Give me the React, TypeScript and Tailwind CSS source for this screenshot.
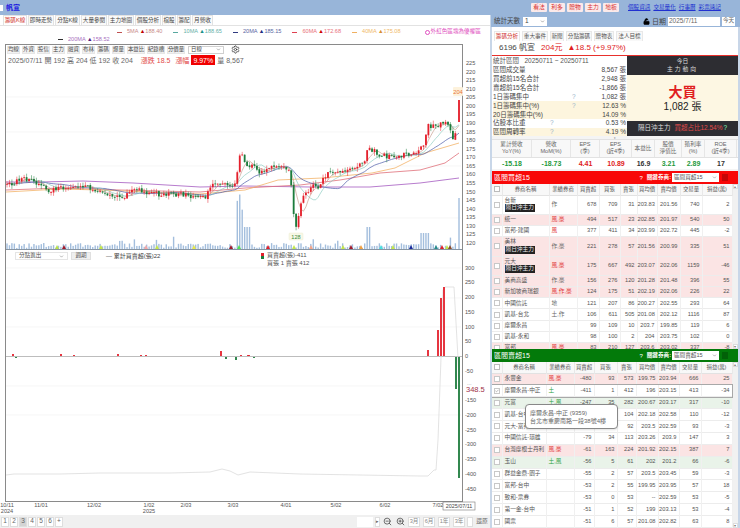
import { Lock, LockOpen, Settings, ZoomIn, ZoomOut, ChevronDown, Check } from "lucide-react";

// price anchors in screen coordinates [x, y of close]
const anchors: [number, number][] = [
  [7, 186], [15, 183], [22, 178], [30, 180], [35, 183], [42, 187], [50, 192], [55, 189], [62, 187], [70, 186],
  [85, 187], [100, 191], [115, 196], [125, 197], [135, 190], [150, 193], [165, 195], [180, 194], [190, 197],
  [205, 198], [208, 192], [212, 183], [225, 183], [236, 185], [238, 165], [240, 153], [244, 158], [247, 165],
  [254, 167], [260, 172], [270, 166], [280, 167], [285, 170], [288, 168], [291, 180], [293, 212], [296, 228],
  [299, 216], [301, 202], [305, 193], [312, 186], [318, 189], [322, 179], [330, 172], [345, 173], [355, 166],
  [365, 160], [368, 149], [375, 151], [380, 155], [392, 157], [400, 155], [410, 154], [420, 149], [424, 143],
  [428, 126], [436, 125], [442, 124], [448, 124], [451, 132], [453, 141], [456, 130], [457, 122], [459, 100],
];

function rng(seed: number) {
  let s = seed;
  return () => {
    s = (s * 16807) % 2147483647;
    return (s - 1) / 2147483646;
  };
}

function closeAt(x: number) {
  for (let i = 1; i < anchors.length; i++) {
    if (x <= anchors[i][0]) {
      const [x0, y0] = anchors[i - 1];
      const [x1, y1] = anchors[i];
      return y0 + ((y1 - y0) * (x - x0)) / (x1 - x0);
    }
  }
  return 100;
}

const r = rng(6196);
const xs: number[] = [];
for (let x = 7; x <= 459; x += 2.45) xs.push(x);
xs[xs.length - 1] = 459;
const closes = xs.map((x, i) => closeAt(x) + (i === xs.length - 1 ? 0 : (r() - 0.5) * 5));
closes[closes.length - 1] = 100;

const candles = closes.map((c, i) => {
  const o = i === 0 ? c + 1 : i === closes.length - 1 ? 122 : closes[i - 1] + (r() - 0.5) * 1.5;
  const top = Math.min(o, c) - (i === closes.length - 1 ? 0 : r() * 4);
  const bottom = Math.max(o, c) + (i === closes.length - 1 ? 0 : r() * 4);
  return { x: xs[i], o, c, top, bottom };
});

function sma(n: number) {
  return closes
    .map((_, i) => {
      let sum = 0;
      for (let k = 0; k < n; k++) sum += closes[Math.max(0, i - k)];
      return `${xs[i].toFixed(1)},${(sum / n).toFixed(1)}`;
    })
    .join(" ");
}

const line200 = "6,182 40,182 83,181 133,183 200,187 245,186 310,187 370,187 420,183 459,178";
const line60 = "6,190 60,188 120,190 200,192 245,188 300,185 340,180 380,173 420,170 445,163 459,153";
const line40 = "6,192 60,189 100,190 200,194 245,190 278,180 322,178 372,173 395,168 425,153 459,143";

const volumes = xs.map((x) => {
  let h = 1 + r() * 5;
  if (r() > 0.88) h += r() * 8;
  if (x > 236 && x < 244) h = 38 + r() * 20;
  if (x >= 244 && x < 250) h = 22;
  if (x > 365 && x < 370) h = 22;
  if (x > 420 && x < 430) h = 16;
  if (x === 459) h = 51;
  return h;
});

const markers: [number, string][] = [
  [57, "#b8e04a"], [64, "#a11a2a"], [101, "#c4e64a"], [146, "#f4a7a7"], [157, "#c4e64a"], [194, "#e8e84a"],
  [231, "#a11a2a"], [239, "#55e055"], [268, "#e0202a"], [294, "#c4e64a"], [311, "#f4a58a"], [343, "#c4e64a"],
  [351, "#a11a2a"], [361, "#f0a040"], [381, "#4ae0e0"], [393, "#c4e64a"], [411, "#1a2a9a"], [436, "#2a8a8a"],
  [442, "#e0202a"], [447, "#c4e64a"], [450, "#8a4a2a"],
];

const priceLabels = [225, 220, 215, 210, 205, 200, 195, 190, 185, 180, 175, 170, 165, 160, 155, 150, 145, 140, 135, 130, 125, 120];
const flowLabels = [300, 250, 200, 150, 100, 50, 0, -50, -150, -200, -250, -300, -350, -400, -450];
const dates: [number, string, string?][] = [
  [7, "10/11", "2024"], [41, "11/01"], [94, "12/02"], [149, "1/02", "2025"], [186, "2/03"], [233, "3/03"],
  [286, "4/01"], [336, "5/02"], [385, "6/02"], [438, "7/02"],
];
const flowBars: [number, number][] = [
  [13, 2], [16, -1], [61, 2], [74, 1], [118, 2], [141, 1], [146, 1], [221, 5], [226, -2], [236, -3], [241, 1],
  [248, 1], [249, 1], [254, -1], [428, 6], [438, 26], [441, 58], [444, 69], [456, -32], [459, -121],
];

function Chart() {
  return (
    <svg viewBox="0 44 490 471" className="block w-[490px] h-[471px]">
      <rect x="5.5" y="44.5" width="457" height="457" fill="#fff" stroke="#8a8a8a" strokeWidth="1" />
      {[97, 132, 166, 218].map((y) => (
        <line key={y} x1="6" x2="461" y1={y} y2={y} stroke="#f2f2f2" strokeWidth="0.7" />
      ))}
      {[268, 298, 327, 386, 415].map((y) => (
        <line key={y} x1="6" x2="461" y1={y} y2={y} stroke="#f2f2f2" strokeWidth="0.7" />
      ))}
      {volumes.map((h, i) => (
        <rect key={i} x={xs[i] - 0.7} y={249 - h} width="1.4" height={h} fill="#a3bedd" />
      ))}
      <polyline points={line200} fill="none" stroke="#a55ac0" strokeWidth="0.8" />
      <polyline points={line60} fill="none" stroke="#e0707a" strokeWidth="0.8" />
      <polyline points={line40} fill="none" stroke="#f2b46a" strokeWidth="0.8" />
      <polyline points={sma(20)} fill="none" stroke="#4a5aa8" strokeWidth="0.7" />
      <polyline points={sma(10)} fill="none" stroke="#7cc4b8" strokeWidth="0.6" />
      <polyline points={sma(5)} fill="none" stroke="#c09080" strokeWidth="0.6" />
      {candles.map((k, i) => {
        const up = k.c <= k.o;
        const color = up ? "#e4202c" : "#1c7c3c";
        return (
          <g key={i}>
            <line x1={k.x} x2={k.x} y1={k.top} y2={k.bottom} stroke={color} strokeWidth="0.5" />
            <rect x={k.x - 0.9} y={Math.min(k.o, k.c)} width="1.8" height={Math.max(0.8, Math.abs(k.o - k.c))} fill={color} />
          </g>
        );
      })}
      <line x1="6" x2="462" y1="249.5" y2="249.5" stroke="#6a7a8a" strokeWidth="0.8" />
      {markers.map(([x, c]) => (
        <polygon key={x} points={`${x - 2},249 ${x + 2},249 ${x},245`} fill={c} />
      ))}
      <rect x="289" y="233" width="14" height="7" rx="1" fill="#f8f8e8" stroke="#e8e8c8" strokeWidth="0.4" />
      <text x="296" y="238.8" fontSize="5.6" textAnchor="middle" fill="#3a8a3a">128</text>
      <rect x="453" y="87" width="10" height="9" rx="1" fill="#fdf2dc" />
      <text x="458" y="94" fontSize="5.8" textAnchor="middle" fill="#e8763a">204</text>
      {priceLabels.map((p) => (
        <text key={p} x="466" y={65 + (225 - p) * 1.714} fontSize="5.6" fill="#555">{p}</text>
      ))}

      <line x1="6" x2="462" y1="356.5" y2="356.5" stroke="#b5b5b5" strokeWidth="0.9" />
      <polyline
        points="6,475 14,474 60,474 100,473 170,473 210,472 222,469 230,471 238,475 250,472 300,474 420,476 428,476 434,470 436,470 438,440 441,358 443,290 445,287 454,287 458,358 459,380"
        fill="none"
        stroke="#dcdcdc"
        strokeWidth="0.8"
      />
      {flowBars.map(([x, v]) => (
        <rect
          key={x}
          x={x - 0.9}
          y={v > 0 ? 356 - v : 357}
          width="1.8"
          height={Math.abs(v)}
          fill={v > 0 ? "#e4202c" : "#1c7c3c"}
        />
      ))}
      {flowLabels.map((v) => (
        <text key={v} x="465" y={358 - v * 0.2945} fontSize="5.6" fill="#555">{v}</text>
      ))}
      <text x="466" y="391.5" fontSize="7.5" fill="#a03048">348.5</text>
      <text x="467" y="385" fontSize="5.6" fill="#999">...</text>
      {dates.map(([x, a, b]) => (
        <g key={a}>
          <text x={x} y="507" fontSize="5.6" textAnchor="middle" fill="#555">{a}</text>
          {b && <text x={x} y="513" fontSize="5.6" textAnchor="middle" fill="#555">{b}</text>}
        </g>
      ))}
      <rect x="443" y="502" width="32" height="8" fill="#fff" stroke="#777" strokeWidth="0.6" />
      <text x="459" y="508" fontSize="5.4" textAnchor="middle" fill="#444">2025/07/11</text>
    </svg>
  );
}

const leftTabs: [string, string][] = [
  ["籌碼K線", "w-[24px]"], ["即時走勢", "w-[26px]"], ["分點K線", "w-[25px]"], ["大量參閱", "w-[26px]"], ["主力地圖", "w-[26px]"],
  ["個股分析", "w-[26px]"], ["檔股", "w-[14px]"], ["籌配", "w-[14px]"], ["月營收", "w-[21px]"],
];
const rightTabs: [string, string][] = [
  ["籌碼分析", "w-[26px]"], ["重大事件", "w-[26px]"], ["新聞", "w-[14px]"], ["分點籌碼", "w-[26px]"], ["贈物表", "w-[20px]"], ["法人目標", "w-[27px]"],
];
const tools = ["均線", "外資", "投信", "主力", "融資", "布林", "籌碼", "爆量"];
const wideTools = ["本益比", "紀錄槽", "分價量"];

function MaLegend({ dash, label, value, color, tri }: { dash: string; label: string; value: string; color: string; tri: string }) {
  return (
    <span className={`flex items-center gap-[5px] whitespace-nowrap ${color}`}>
      <span className={`inline-block w-[5px] h-px ${dash}`} />
      <span>
        {label} <span className={tri}>▲</span>
        {value}
      </span>
    </span>
  );
}

function LeftPanel() {
  return (
    <div className="w-[490px] bg-white flex flex-col">
      <div className="h-[11px] pl-[3px] flex items-end gap-[1px] text-[5.6px] text-[#444] border-b border-[#e2e2e2] leading-none whitespace-nowrap">
        {leftTabs.map(([t, w], i) => (
          <span
            key={t}
            className={`${w} h-[10px] flex items-center justify-center border border-b-0 border-[#e2e2e2] ${i === 0 ? "text-[#d0342c] bg-white" : "bg-[#fafafa]"}`}
          >
            {t}
          </span>
        ))}
      </div>
      <div className="h-[18px] text-[5.6px] leading-none relative">
        <div className="flex items-center pt-[2px] h-[10px] pl-[117px] gap-[11px]">
          <MaLegend dash="bg-[#c05050]" label="5MA" value="188.40" color="text-[#c98a8a]" tri="text-[#c00000]" />
          <MaLegend dash="bg-[#58a8a0]" label="10MA" value="188.65" color="text-[#66b0a8]" tri="text-[#20908a]" />
          <MaLegend dash="bg-[#303a80]" label="20MA" value="185.15" color="text-[#5a64a0]" tri="text-[#202a80]" />
          <MaLegend dash="bg-[#e04050]" label="60MA" value="172.68" color="text-[#e8707a]" tri="text-[#d00000]" />
          <MaLegend dash="bg-[#f0b060]" label="40MA" value="175.08" color="text-[#f0b868]" tri="text-[#d89030]" />
          <span className="ml-[13px] flex items-center gap-px text-[#e050c0] whitespace-nowrap">
            <span className="inline-block w-[5px] h-[5px] rounded-full border border-[#e050c0]" />
            外紅色區塊為優權區
          </span>
          <Lock size={7} className="ml-[1px] text-black" fill="black" />
        </div>
        <div className="flex items-center h-[7px] pl-[58px]">
          <MaLegend dash="bg-[#303030]" label="200MA" value="158.52" color="text-[#a870c0]" tri="text-[#502080]" />
        </div>
      </div>
      <div className="relative h-[471px]">
        <Chart />
        <div className="absolute top-[1px] left-[7px] flex items-center gap-[2px] text-[5.4px] leading-none text-[#444] whitespace-nowrap">
          {tools.map((t) => (
            <span key={t} className="w-[13px] h-[8px] flex items-center justify-center bg-[#f2f2f2] border border-[#e6e6e6]">
              {t}
            </span>
          ))}
          {wideTools.map((t) => (
            <span key={t} className="w-[18px] h-[8px] flex items-center justify-center bg-[#f2f2f2] border border-[#e6e6e6]">
              {t}
            </span>
          ))}
          <span className="w-[36px] h-[8px] ml-px px-[2px] flex items-center justify-between border border-[#cfcfcf] bg-white">
            日線
            <ChevronDown size={5} />
          </span>
          <Settings size={9} className="ml-[5px] text-[#333]" />
        </div>
        <div className="absolute top-[11px] left-[8px] flex items-center text-[7px] leading-none text-[#666] whitespace-pre">
          <span>2025/07/11 開 192 高 204 低 192 收 204</span>
          <span className="ml-[8px] text-[#e24a4a]">漲跌 18.5</span>
          <span className="ml-[5px] text-[#e24a4a]">漲幅</span>
          <span className="ml-[2px] px-[2px] h-[10px] flex items-center bg-[#f00000] text-white">9.97%</span>
          <span className="ml-[2px]">量 8,567</span>
        </div>
        <div className="absolute top-[208px] left-[15px] flex items-center text-[5.6px] leading-none text-[#555] whitespace-nowrap">
          <span className="w-[53px] h-[8px] px-[3px] flex items-center justify-between border border-[#e5e5e5] bg-white">
            分點進出
            <ChevronDown size={5} />
          </span>
          <span className="ml-[3px] w-[20px] h-[8px] flex items-center justify-center bg-[#efefef] border border-[#e0e0e0]">
            週期
          </span>
          <span className="ml-[15px] text-[6px] text-[#444]">— 累計買賣超(張)22</span>
        </div>
        <div className="absolute top-[208px] left-[261px] flex items-start gap-[3px] text-[6px] leading-none text-[#555] whitespace-nowrap">
          <span className="w-[3px] h-[6px] mt-px bg-[linear-gradient(#e4202c_50%,#1c7c3c_50%)]" />
          <span className="flex flex-col gap-[2px]">
            <span>買賣超(張)-411</span>
            <span>買張 1 賣張 412</span>
          </span>
        </div>
      </div>
      <div className="flex-1 bg-[#f0f0f0] flex items-center pl-[1px] gap-px text-[6.5px] text-[#666] leading-none whitespace-nowrap">
        {["1", "2", "3", "4", "5", "6", "+"].map((p) => (
          <span key={p} className={`w-[8px] h-[10px] flex items-center justify-center border border-[#dedede] ${p === "3" ? "bg-[#d4d4d4]" : "bg-white"}`}>
            {p}
          </span>
        ))}
        <span className="ml-auto w-[16px] h-[10px] bg-white" />
        <span className="ml-[1px] w-[5px] h-[10px] bg-white border border-[#dedede] flex items-center justify-center text-[5px]">▸</span>
        <ZoomOut size={9} className="ml-[2px] text-[#444]" />
        <ZoomIn size={9} className="ml-[3px] text-[#444]" />
        {["3月", "6月", "1年", "3年"].map((p) => (
          <span key={p} className="ml-[2px] w-[12px] h-[10px] flex items-center justify-center bg-white border border-[#dedede] text-[#888] text-[5.6px]">
            {p}
          </span>
        ))}
        <span className="ml-[1px] w-[6px] h-[10px] bg-white border border-[#dedede]" />
        <span className="ml-[2px] mr-[2px] w-[12px] h-[10px] flex items-center justify-center text-[5.8px]">還原</span>
      </div>
    </div>
  );
}

// label, value, class for the label width (sets where the "?" sits), cream row
const infoRows: [string, string, string, boolean, boolean][] = [
  ["區間成交量", "8,567 張", "w-[57px]", false, false],
  ["買超前15名合計", "2,948 張", "w-[57px]", false, false],
  ["賣超前15名合計", "-1,866 張", "w-[57px]", false, false],
  ["1日籌碼集中", "1,082 張", "w-[79px]", true, false],
  ["1日籌碼集中(%)", "12.63 %", "w-[79px]", true, true],
  ["20日籌碼集中(%)", "14.09 %", "w-[79px]", false, true],
  ["佔股本比重", "0.53 %", "w-[57px]", true, false],
  ["區間周轉率", "4.19 %", "w-[57px]", true, true],
];

const stats: { h: string[]; v: string; c: string; w: string }[] = [
  { h: ["累計營收", "YoY(%)"], v: "-15.18", c: "text-[#1f9a3c]", w: "w-[40px]" },
  { h: ["營收", "MoM(%)"], v: "-18.73", c: "text-[#1f9a3c]", w: "w-[39px]" },
  { h: ["EPS", "(季)"], v: "4.41", c: "text-[#e02020]", w: "w-[29px]" },
  { h: ["EPS", "(近4季)"], v: "10.89", c: "text-[#e02020]", w: "w-[32px]" },
  { h: ["本益比"], v: "16.9", c: "text-[#333]", w: "w-[23px]" },
  { h: ["股價", "淨值比"], v: "3.21", c: "text-[#1f9a3c]", w: "w-[27px]" },
  { h: ["殖利率", "(%)"], v: "2.89", c: "text-[#1f9a3c]", w: "w-[23px]" },
  { h: ["ROE", "(近4季)"], v: "17", c: "text-[#333]", w: "w-[32px]" },
];

type Row = {
  name: string;
  tag?: boolean;
  brokers: string;
  bc?: string;
  nums: (string | number)[];
  bg?: string;
  checked?: boolean;
};

const buyRows: Row[] = [
  { name: "台新", tag: true, brokers: "作", nums: [678, 709, 31, "203.83", "201.56", 740, 2] },
  { name: "統一", brokers: "風,豪", bc: "text-[#e03030]", nums: [494, 517, 23, "202.85", "201.97", 540, 50], bg: "bg-[#fbe4e4]" },
  { name: "富邦-建國", brokers: "風", bc: "text-[#e03030]", nums: [377, 411, 34, "203.99", "202.72", 445, -2] },
  { name: "美林", tag: true, brokers: "作,豪", nums: [221, 278, 57, "201.56", "200.99", 335, 51], bg: "bg-[#fbe4e4]" },
  { name: "元大", tag: true, brokers: "風,豪", bc: "text-[#e03030]", nums: [175, 667, 492, "203.07", "202.06", 1159, -46], bg: "bg-[#fbe4e4]" },
  { name: "美商高盛", brokers: "作,豪", nums: [156, 276, 120, "201.28", "201.48", 396, 55], bg: "bg-[#fbe4e4]" },
  { name: "新加坡商瑞銀", brokers: "風,作,豪", bc: "text-[#e03030]", nums: [124, 175, 51, "202.19", "202.06", 226, 22], bg: "bg-[#fbe4e4]" },
  { name: "中國信託", brokers: "地", nums: [121, 207, 86, "200.27", "202.55", 293, 64] },
  { name: "凱基-台北", brokers: "土,作", nums: [106, 611, 505, "201.08", "202.12", 1116, 87] },
  { name: "摩爾永昌", brokers: "", nums: [99, 109, 10, "203.7", "199.85", 119, 6] },
  { name: "凱基-永和", brokers: "", nums: [98, 100, 2, 204, "203.75", 102, 0] },
  { name: "富邦", brokers: "風,豪", bc: "text-[#e03030]", nums: [83, 210, 127, "203.6", "203.02", 337, -8], bg: "bg-[#fbe4e4]" },
];

const sellRows: Row[] = [
  { name: "永豐金", brokers: "風,豪", bc: "text-[#e03030]", nums: [-480, 93, 573, "199.75", "203.94", 666, 25], bg: "bg-[#fbe4e4]" },
  { name: "摩爾永昌-中正", brokers: "土", bc: "text-[#2aa040]", nums: [-411, 1, 412, 196, "203.15", 413, -34], checked: true },
  { name: "元富", brokers: "土,風", bc: "text-[#2aa040]", nums: [-247, 35, 282, "200.67", "203.17", 317, -10], bg: "bg-[#e9f3e9]" },
  { name: "凱基-台中", brokers: "", nums: [-102, 2, 104, "202.18", "202.58", 110, -12] },
  { name: "元大-富邦", brokers: "", nums: [-90, 2, 92, "203.5", "202.59", 93, -3] },
  { name: "中國信託-環雄", brokers: "", nums: [-79, 34, 113, "203.26", "203.9", 147, 3] },
  { name: "台灣摩根士丹利", brokers: "風,豪", bc: "text-[#e03030]", nums: [-61, 163, 224, "201.92", "202.15", 387, 7], bg: "bg-[#fbe4e4]" },
  { name: "玉山", brokers: "土,風", bc: "text-[#2aa040]", nums: [-56, 5, 61, 202, "201.2", 66, -6], bg: "bg-[#e9f3e9]" },
  { name: "群益金鼎-園子", brokers: "", nums: [-55, 2, 57, "203.5", "203.45", 59, -3] },
  { name: "富邦-台中", brokers: "", nums: [-53, 2, 55, "199.95", "203.95", 57, 18] },
  { name: "致和-票券", brokers: "", nums: [-53, 0, 53, "--", "202.59", 53, -5] },
  { name: "第一金-台中", brokers: "", nums: [-51, 1, 52, 199, "203.13", 53, -4] },
  { name: "國票", brokers: "", nums: [-51, 6, 57, "201.08", "202.82", 63, 8] },
];

const heads = ["券商名稱", "業績券商", "買賣超", "買張", "賣張", "買均價", "賣均價", "交易量", "損益(萬)"];

function BrokerTable({ rows, widths, rowH }: { rows: Row[]; widths: number[]; rowH: string }) {
  return (
    <table className="table-fixed border-collapse w-[240px] text-[5.7px] leading-none text-[#555]">
      <colgroup>
        {widths.map((w, i) => (
          <col key={i} style={{ width: w }} />
        ))}
      </colgroup>
      <thead>
        <tr className="h-[11px] bg-[#f8f8f8] border-b border-[#e2e2e2]">
          <th className="border-r border-[#e8e8e8]">
            <span className="block mx-auto w-[6px] h-[6px] border border-[#bbb] bg-white" />
          </th>
          {heads.map((h) => (
            <th key={h} className="font-normal text-[5.4px] border-r border-[#e8e8e8] whitespace-nowrap overflow-hidden">
              {h}
            </th>
          ))}
        </tr>
      </thead>
      <tbody>
        {rows.map((row) => (
          <tr
            key={row.name}
            className={`${row.tag ? "h-[19.5px]" : rowH} border-b border-[#ececec] ${row.bg ?? ""} ${row.checked ? "outline outline-1 outline-[#a8a8a8]" : ""}`}
          >
            <td className="border-r border-[#f0f0f0]">
              <span className="flex items-center justify-center mx-auto w-[6px] h-[6px] border border-[#c8c8c8] bg-white">
                {row.checked && <Check size={6} className="text-[#333]" />}
              </span>
            </td>
            <td className="pl-[2px] border-r border-[#f0f0f0] whitespace-nowrap overflow-hidden">
              <div>{row.name}</div>
              {row.tag && <div className="mt-px w-fit px-px py-[1px] bg-[#222] text-[#eee]">隔日沖主力</div>}
            </td>
            <td className={`pl-[2px] border-r border-[#f0f0f0] whitespace-nowrap ${row.bc ?? "text-[#666]"}`}>{row.brokers}</td>
            {row.nums.map((n, i) => (
              <td key={i} className="pr-[2px] text-right border-r border-[#f0f0f0]">
                {n}
              </td>
            ))}
          </tr>
        ))}
      </tbody>
    </table>
  );
}

function Scrollbar() {
  return (
    <div className="w-[5px] h-full bg-[#f1f1f1] flex flex-col justify-between items-center text-[4px] text-[#777] leading-none">
      <span className="w-[5px] h-[5px] bg-white border border-[#ddd] flex items-center justify-center">▴</span>
      <span className="w-[5px] h-[5px] bg-white border border-[#ddd] flex items-center justify-center">▾</span>
    </div>
  );
}

function RightPanel() {
  return (
    <div className="flex-1 bg-[#c8d6e8] pl-[2px] pr-[2px] flex flex-col overflow-hidden text-[#444]">
      <div className="h-[12px] flex items-center bg-[#98b5d9] -ml-[1px] -mr-[2px] pl-[3px] pr-[5px] text-[6.5px] leading-none whitespace-nowrap">
        <span>統計天數</span>
        <span className="ml-[3px] w-[24px] h-[9px] bg-white flex items-center justify-between px-[2px] text-[6.5px]">
          1
          <ChevronDown size={5} />
        </span>
        <LockOpen size={7} className="ml-auto text-black" fill="black" />
        <span className="ml-[2px] text-[7px]">日期</span>
        <span className="ml-[2px] w-[52px] h-[9px] bg-white flex items-center px-[1px] text-[6.5px] text-[#666]">2025/7/11</span>
        <span className="ml-[2px] w-[13px] h-[9px] bg-white flex items-center justify-center text-[5.6px] text-[#666]">今天</span>
      </div>
      <div className="h-[14px] bg-white pt-[3px] pl-[2px] flex items-end gap-[2px] text-[5.6px] leading-none whitespace-nowrap">
        {rightTabs.map(([t, w], i) => (
          <span key={t} className={`${w} h-[10px] flex items-center justify-center border border-b-0 border-[#e8e8e8] ${i === 0 ? "text-[#d0342c]" : "bg-[#f8f8f8] text-[#555]"}`}>
            {t}
          </span>
        ))}
      </div>
      <div className="h-[15px] bg-white border-b-[1.5px] border-[#e8302c] flex items-center pl-[7px] text-[8px] leading-none whitespace-nowrap">
        <span className="text-[#444]">6196 帆宣</span>
        <span className="ml-[6px] text-[#e02020]">204元</span>
        <span className="ml-[5px] text-[#e02020]">▲18.5 (+9.97%)</span>
      </div>
      <div className="h-[80px] bg-white flex">
        <div className="w-[135px] text-[6.5px] leading-none pl-[1px] pt-[1px]">
          <div className="h-[8.9px] flex items-center whitespace-pre text-[#555]">統計區間   20250711 ~ 20250711</div>
          {infoRows.map(([l, v, w, q, cream]) => (
            <div key={l} className={`h-[8.9px] flex items-center whitespace-nowrap ${cream ? "bg-[#fdf5de]" : ""}`}>
              <span className={w}>{l}</span>
              <span className="w-[8px] text-[#9ab4c8]">{q ? "?" : ""}</span>
              <span className="flex-1 text-right pr-[1px]">{v}</span>
            </div>
          ))}
        </div>
        <div className="flex-1 flex flex-col">
          <div className="h-[19px] bg-[#2d2d32] text-[#ddd] text-[5.8px] leading-none flex flex-col items-center justify-center gap-[2px]">
            <span>今日</span>
            <span className="tracking-[2px]">主力動向</span>
          </div>
          <div className="h-[46px] bg-[#fdf7e3] flex flex-col items-center justify-center leading-none">
            <span className="text-[14px] font-bold text-[#e02020]">大買</span>
            <span className="mt-[3px] text-[10px] text-[#222]">1,082 張</span>
          </div>
          <div className="flex-1 bg-[#2d2d32] flex items-center justify-center text-[6.5px] leading-none text-[#ddd] whitespace-nowrap">
            隔日沖主力
            <span className="ml-[4px] text-[#e04a4a]">買超占比12.54%</span>
            <span className="ml-[1px] text-[#8fb]">?</span>
          </div>
        </div>
      </div>
      <div className="h-[3px] bg-[#f4f4f4] flex justify-center text-[3px] text-[#777]">▾</div>
      <div className="h-[30px] bg-white flex flex-col text-[5.6px] leading-none">
        <div className="h-[19px] flex bg-[#f8f8f8] border-y border-[#e2e2e2] text-[#666]">
          {stats.map((s) => (
            <div key={s.h.join()} className={`${s.w} flex flex-col items-center justify-center gap-[1px] border-r border-[#e6e6e6]`}>
              {s.h.map((t) => (
                <span key={t}>{t}</span>
              ))}
            </div>
          ))}
        </div>
        <div className="flex-1 flex text-[7px] font-bold">
          {stats.map((s) => (
            <div key={s.h.join()} className={`${s.w} flex items-center justify-center ${s.c}`}>
              {s.v}
            </div>
          ))}
        </div>
      </div>
      <div className="h-[2px] bg-[#f4f4f4] shrink-0" />
      <div className="h-[178px] bg-white overflow-hidden flex flex-col shrink-0">
        <TableHead title="區間買超15" bg="bg-[#f80808]" value="區間買超15" />
        <div className="flex flex-1 overflow-hidden">
          <BrokerTable rows={buyRows} widths={[10, 47, 28, 22, 21, 17, 20, 23, 22, 30]} rowH="h-[11.1px]" />
          <Scrollbar />
        </div>
      </div>
      <div className="flex-1 bg-white overflow-hidden flex flex-col relative">
        <TableHead title="區間賣超15" bg="bg-[#037a0a]" value="區間賣超15" />
        <div className="flex flex-1 overflow-hidden">
          <BrokerTable rows={sellRows} widths={[10, 44, 28, 20, 23, 19, 22, 21, 22, 31]} rowH="h-[11.4px]" />
          <Scrollbar />
        </div>
        <div className="absolute top-[55px] left-[33px] w-[93px] h-[25px] bg-white border border-[#888] rounded-[4px] flex flex-col justify-center pl-[4px] gap-[2px] text-[6px] leading-none text-[#666] shadow-sm whitespace-nowrap">
          <span>摩爾永昌-中正 (9359)</span>
          <span>台北市重慶南路一段38號4樓</span>
        </div>
      </div>
    </div>
  );
}

function TableHead({ title, bg, value }: { title: string; bg: string; value: string }) {
  return (
    <div className={`h-[13px] shrink-0 ${bg} flex items-center pl-[2px] pr-[3px] text-white leading-none whitespace-nowrap`}>
      <span className="text-[7px]">{title}</span>
      <span className="ml-auto text-[6px]">?</span>
      <span className="ml-[4px] text-[5.6px] font-bold">關鍵券商:</span>
      <span className="ml-[1px] w-[47px] h-[9px] bg-white text-[#555] text-[5.6px] flex items-center justify-between px-[2px]">
        {value}
        <ChevronDown size={5} />
      </span>
      <span className="ml-[3px] w-[6px] h-[7px] bg-[#00000033]" />
      <span className="ml-[1px] w-[6px] h-[7px]" />
    </div>
  );
}

const topButtons = ["看法", "利多", "贈物", "主力", "地板"];
const topLinks = ["個股資訊", "交易量化", "行事曆", "彩票速記"];

export default function App() {
  return (
    <div className="w-[740px] h-[528px] overflow-hidden flex flex-col bg-[#98b5d9] font-['Liberation_Sans','Noto_Sans_CJK_TC',sans-serif]">
      <div className="h-[15px] shrink-0 flex items-center text-[7px] leading-none whitespace-nowrap">
        <span className="w-[3px] h-[6px] bg-white" />
        <span className="ml-[3px] w-[14px] font-bold text-[#1a1ae0]">帆宣</span>
        <div className="ml-[511px] flex gap-[2px] text-[5.8px] text-[#d83030]">
          {topButtons.map((b) => (
            <span key={b} className="w-[16px] h-[9px] bg-[#fbeaea] rounded-[1px] flex items-center justify-center">
              {b}
            </span>
          ))}
        </div>
        <div className="ml-[9px] flex gap-[3px] text-[5.6px] text-[#2030d0] underline">
          {topLinks.map((l) => (
            <span key={l}>{l}</span>
          ))}
        </div>
      </div>
      <div className="flex flex-1 overflow-hidden">
        <LeftPanel />
        <RightPanel />
      </div>
    </div>
  );
}
